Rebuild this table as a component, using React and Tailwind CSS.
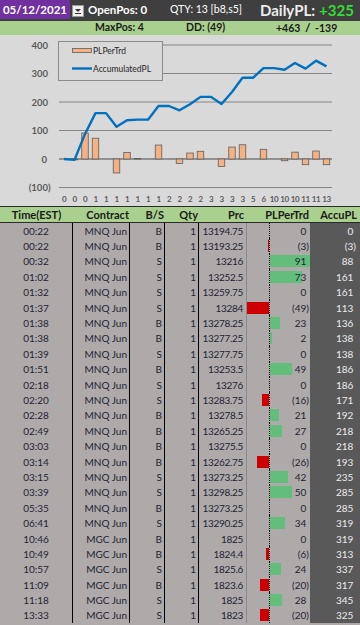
import React from 'react';

const rows = [
  ['00:22', 'MNQ Jun', 'B', '13194.75', 0, 0],
  ['00:22', 'MNQ Jun', 'B', '13193.25', -3, -3],
  ['00:32', 'MNQ Jun', 'S', '13216', 91, 88],
  ['01:02', 'MNQ Jun', 'S', '13252.5', 73, 161],
  ['01:32', 'MNQ Jun', 'S', '13259.75', 0, 161],
  ['01:37', 'MNQ Jun', 'S', '13284', -49, 113],
  ['01:38', 'MNQ Jun', 'B', '13278.25', 23, 136],
  ['01:38', 'MNQ Jun', 'B', '13277.25', 2, 138],
  ['01:39', 'MNQ Jun', 'S', '13277.75', 0, 138],
  ['01:51', 'MNQ Jun', 'B', '13253.5', 49, 186],
  ['02:18', 'MNQ Jun', 'S', '13276', 0, 186],
  ['02:20', 'MNQ Jun', 'S', '13283.75', -16, 171],
  ['02:28', 'MNQ Jun', 'B', '13278.5', 21, 192],
  ['02:49', 'MNQ Jun', 'B', '13265.25', 27, 218],
  ['03:03', 'MNQ Jun', 'B', '13275.5', 0, 218],
  ['03:14', 'MNQ Jun', 'B', '13262.75', -26, 193],
  ['03:15', 'MNQ Jun', 'S', '13273.25', 42, 235],
  ['03:39', 'MNQ Jun', 'S', '13298.25', 50, 285],
  ['05:35', 'MNQ Jun', 'B', '13273.25', 0, 285],
  ['06:41', 'MNQ Jun', 'S', '13290.25', 34, 319],
  ['10:46', 'MGC Jun', 'B', '1825', 0, 319],
  ['10:49', 'MGC Jun', 'B', '1824.4', -6, 313],
  ['10:57', 'MGC Jun', 'S', '1825.6', 24, 337],
  ['11:09', 'MGC Jun', 'B', '1823.6', -20, 317],
  ['11:18', 'MGC Jun', 'S', '1825', 28, 345],
  ['13:33', 'MGC Jun', 'S', '1823', -20, 325],
]

const hours = [0, 0, 0, 1, 1, 1, 1, 1, 1, 1, 2, 2, 2, 2, 3, 3, 3, 3, 5, 6, 10, 10, 10, 11, 11, 13]

// accounting style: positives keep room for the closing paren
const Num = ({ v }) =>
  v < 0 ? <span>({-v})</span> : <span>{v}<span className="opacity-0">)</span></span>

const X = i => 64 + i * 10.5
const Y = v => 124 - v * 0.285

function Chart() {
  const line = rows.map((r, i) => `${X(i)},${Y(r[5])}`).join(' ')
  return (
    <svg width="360" height="171" viewBox="0 0 360 171" className="block" style={{ fontFamily: 'Lato, sans-serif' }}>
      {[400, 300, 200, 100, -100].map(g => (
        <line key={g} x1="59" x2="332" y1={Y(g)} y2={Y(g)} stroke="#868686" strokeWidth="1.2" />
      ))}
      <line x1="59" x2="332" y1={Y(0)} y2={Y(0)} stroke="#7a7a7a" strokeWidth="1.6" />
      {[400, 300, 200, 100].map(g => (
        <text key={g} x="48" y={Y(g) + 3.5} textAnchor="end" fontSize="9.5" fontWeight="700" fill="#595959">{g}</text>
      ))}
      <text x="47" y={Y(0) + 3.5} textAnchor="end" fontSize="9.5" fontWeight="700" fill="#595959">0</text>
      <text x="50.5" y={Y(-100) + 3.5} textAnchor="end" fontSize="9.5" fontWeight="700" fill="#595959">(100)</text>
      {rows.map((r, i) => {
        const v = r[4]
        if (v === 0) return null
        return (
          <rect key={i} x={X(i) - 3.25} width="6.5" y={Math.min(Y(v), Y(0))} height={Math.abs(v) * 0.285}
            fill="#f4b183" stroke="#5f5f5f" strokeWidth="0.8" />
        )
      })}
      <polyline points={line} fill="none" stroke="#0070c0" strokeWidth="2.4" strokeLinejoin="round" />
      {hours.map((h, i) => (
        <text key={i} x={X(i)} y="167" textAnchor="middle" fontSize="8" fontWeight="700" letterSpacing="-0.4" fill="#595959">{h}</text>
      ))}
      <rect x="58.5" y="6.5" width="104" height="39" fill="#d9d9d9" stroke="#8c8c8c" strokeWidth="1" />
      <rect x="72.5" y="13.5" width="19" height="4" fill="#f4b183" stroke="#5f5f5f" strokeWidth="0.8" />
      <text x="93" y="18.5" fontSize="8.5" fill="#262626">PLPerTrd</text>
      <line x1="72" x2="92" y1="33.5" y2="33.5" stroke="#0070c0" strokeWidth="2.4" />
      <text x="93" y="36.5" fontSize="8.5" fill="#262626">AccumulatedPL</text>
    </svg>
  )
}

function Row({ r }) {
  const [t, c, bs, prc, pl, acc] = r
  return (
    <div className="flex h-[15.4px] items-stretch text-[10px] leading-none text-[#1e2433]">
      <div className="w-[73px] border-r border-black flex items-center justify-center">{t}</div>
      <div className="w-[57px] border-r border-black flex items-center justify-end pr-[2px]">{c}</div>
      <div className="w-[35px] border-r border-black flex items-center justify-end pr-[2px]">{bs}</div>
      <div className="w-[34px] border-r border-black flex items-center justify-end pr-[2px]">1</div>
      <div className="w-[48px] border-r border-[#8a8a8a] flex items-center justify-end pr-[3px] tracking-[-0.3px]">{prc}</div>
      <div className="w-[22px] flex items-center justify-end">
        {pl < 0 && <div className="h-[12px] bg-[#cc0000]" style={{ width: Math.max(1.5, -pl * 0.45) }} />}
      </div>
      <div className="w-[41px] border-l border-dotted border-black grid">
        {pl > 0 && (
          <div className="col-start-1 row-start-1 self-center h-[12px] bg-[#63be7b]" style={{ width: Math.max(1.5, pl * 0.44) }} />
        )}
        <div className="col-start-1 row-start-1 self-center text-right pr-[1px]"><Num v={pl} /></div>
      </div>
      <div className="flex-1 bg-[#595959] text-[#ececec] flex items-center justify-end pr-[4px]"><Num v={acc} /></div>
    </div>
  )
}

export default function App() {
  return (
    <div className="w-[360px] h-[625px] overflow-hidden bg-[#aeaaaa]" style={{ fontFamily: 'Lato, "Liberation Sans", sans-serif' }}>
      <div className="h-[21px] bg-[#3f3f3f] flex items-start text-white font-bold">
        <div className="w-[70px] h-[19px] bg-[#7030a0] flex items-center justify-center text-[11.5px]">05/12/2021</div>
        <div className="ml-[2px] mt-[5px] w-[12px] h-[12px] bg-[#f0f0f0] border border-[#9a9a9a] flex flex-col items-center justify-center gap-[1px]">
          <div className="w-0 h-0 border-l-[3px] border-r-[3px] border-t-[3px] border-l-transparent border-r-transparent border-t-[#333]" />
          <div className="w-[6px] h-[1px] bg-[#333]" />
        </div>
        <div className="ml-[4px] w-[82px] h-[19px] flex items-center text-[11.5px]">OpenPos: 0</div>
        <div className="w-[90px] h-[19px] flex items-center text-[10.5px] font-normal">QTY: 13 [b8,s5]</div>
        <div className="h-[20px] flex items-center text-[15px]">
          <span className="text-[#ededed]">DailyPL:</span>
          <span className="ml-[4px] text-[#33dd33]">+325</span>
        </div>
      </div>
      <div className="h-[14px] bg-[#a9d08e] flex items-center pl-[95px] text-[10.5px] font-bold text-[#1a1a1a]">
        <div className="w-[91px]">MaxPos: 4</div>
        <div className="w-[90px]">DD: (49)</div>
        <div>+463 <span className="text-[12px] mx-[2px]">/</span> -139</div>
      </div>
      <div className="h-[172px] bg-[#d9d9d9] border-b border-[#2a2a2a]">
        <Chart />
      </div>
      <div className="h-[16px] bg-[#a9d08e] border-b border-[#2a2a2a] flex items-center text-[11px] font-bold text-[#1a1a1a] leading-none">
        <div className="w-[73px] text-center">Time(EST)</div>
        <div className="w-[57px] text-right pr-[1px]">Contract</div>
        <div className="w-[35px] text-right pr-[1px]">B/S</div>
        <div className="w-[34px] text-right pr-[1px]">Qty</div>
        <div className="w-[48px] text-right pr-[3px]">Prc</div>
        <div className="w-[63px] text-right pr-[1px]">PLPerTrd</div>
        <div className="flex-1 text-right pr-[3px]">AccuPL</div>
      </div>
      {rows.map((r, i) => <Row key={i} r={r} />)}
    </div>
  )
}
